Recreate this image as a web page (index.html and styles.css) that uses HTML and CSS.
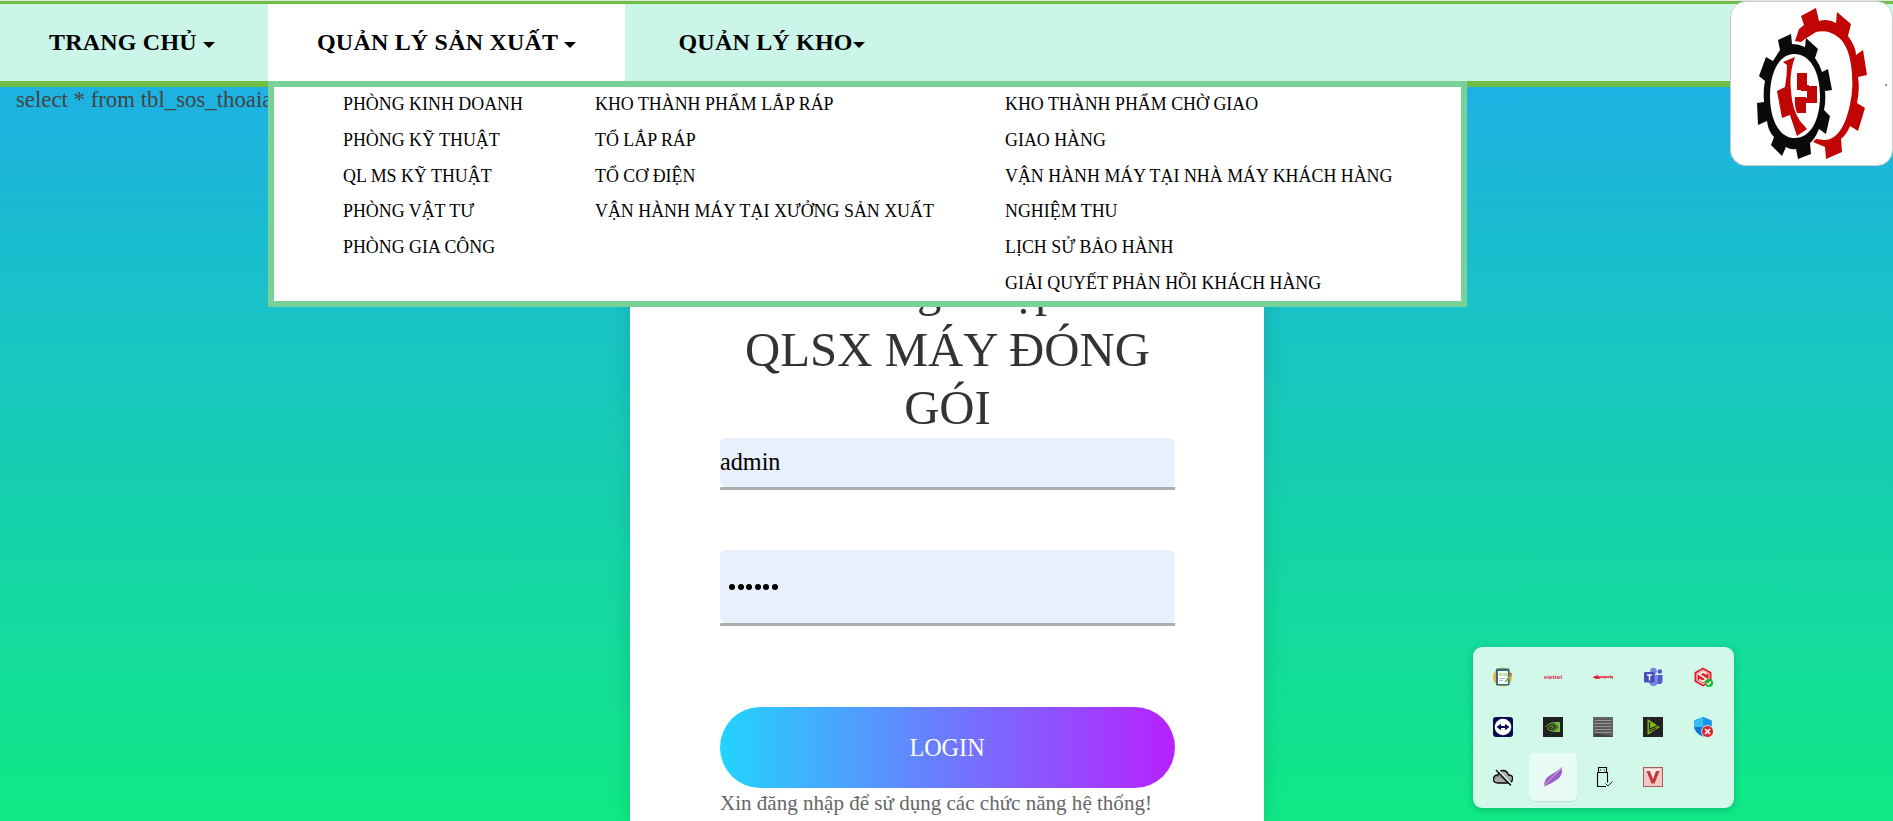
FILE: index.html
```html
<!DOCTYPE html>
<html lang="vi">
<head>
<meta charset="utf-8">
<title>QLSX</title>
<link rel="stylesheet" href="styles.css">
</head>
<body>
<header class="navbar">
  <nav class="menu">
    <a class="tab home">TRANG CHỦ <i class="caret"></i></a>
    <div class="tab active">QUẢN LÝ SẢN XUẤT <i class="caret"></i>
      <div class="dropdown">
        <ul class="col c1"><li>PHÒNG KINH DOANH</li><li>PHÒNG KỸ THUẬT</li><li>QL MS KỸ THUẬT</li><li>PHÒNG VẬT TƯ</li><li>PHÒNG GIA CÔNG</li></ul>
        <ul class="col c2"><li>KHO THÀNH PHẨM LẮP RÁP</li><li>TỔ LẮP RÁP</li><li>TỔ CƠ ĐIỆN</li><li>VẬN HÀNH MÁY TẠI XƯỞNG SẢN XUẤT</li></ul>
        <ul class="col"><li>KHO THÀNH PHẨM CHỜ GIAO</li><li>GIAO HÀNG</li><li>VẬN HÀNH MÁY TẠI NHÀ MÁY KHÁCH HÀNG</li><li>NGHIỆM THU</li><li>LỊCH SỬ BẢO HÀNH</li><li>GIẢI QUYẾT PHẢN HỒI KHÁCH HÀNG</li></ul>
      </div>
    </div>
    <a class="tab store">QUẢN LÝ KHO<i class="caret tight"></i></a>
  </nav>
</header>
<div class="logo">
  <svg viewBox="0 0 163 164" width="163" height="164">
    <g fill="#c10505">
      <path d="M65 40L69 28L74 24L71 15L86 7L89 20Q98 17 106 22L107 11L121 23L118 35Q126 46 126 54L133 49L137 74L128 76Q130 88 127 102L135 107L128 130L120 125Q117 133 111 138L112 151L96 158L95 146L83 141L86 138L94 139Q108 139 116 118Q124 95 122 73Q120 45 108 36Q98 28 86 31L75 38L71 41Z"/>
      <path d="M53 61L65 56Q59 72 61 90Q62 108 70 120L77 128L67 135L60 114L52 117L47 90L55 86Q57 74 57 64Z"/>
      <path d="M67 72h10v17h-10zM77 85h10v17h-10zM65 96h11v16h-9q-3-8-2-16zM71 84h8v6h-8zM73 97h6v5h-6z"/>
    </g>
    <path fill="#0a0a0c" fill-rule="evenodd" d="M48 39L61 33L62 43Q69 43 75 46L76 37L88 48L85 57Q90 64 92 71L98 68L102 89L95 90Q96 101 94 109L100 115L96 133L89 128Q85 138 80 142L81 153L68 158L66 148Q61 149 56 146L52 155L41 144L44 136Q38 130 37 120L28 124L27 102L34 101Q33 88 35 80L29 75L36 56L43 60L50 49ZM64 53C50 53 40 70 40 95C40 120 50 137 65 137C80 137 90 120 90 95C90 70 80 53 64 53Z"/>
    <circle cx="156" cy="84" r="1" fill="#666"/>
  </svg>
</div>
<p class="query">select * from tbl_sos_thoaia</p>
<main class="card">
  <h1><span class="greet">Đăng Nhập</span>QLSX MÁY ĐÓNG GÓI</h1>
  <div class="field user"><span>admin</span></div>
  <div class="field pass"><i></i><i></i><i></i><i></i><i></i><i></i></div>
  <button class="login">LOGIN</button>
  <p class="note">Xin đăng nhập để sử dụng các chức năng hệ thống!</p>
</main>
<aside class="tray">
  <span><svg viewBox="0 0 20 20"><circle cx="9.500" cy="10" r="9.500" fill="#f3ae35"/><rect x="3" y="1.500" width="13.500" height="17" rx="1" fill="#2d7180"/><rect x="5" y="4" width="9.800" height="13" fill="#fff"/><path d="M6 6h3v3H6zM10 6h4v3h-4z" fill="#b9e58d"/><path d="M6 11h6v1H6zM6 13h4v1H6z" fill="#bda9e6"/><path d="M12 15l6-7" stroke="#75b84d" stroke-width="1.800"/><path d="M17 9l1-3" stroke="#e34b35" stroke-width="2"/></svg></span>
  <span class="viettel">viettel</span>
  <span><svg viewBox="0 0 20 20"><path d="M0 9.500l3-.5 1-2 1 2h12l1-1v1h2v3h-1v-1h-1v1l-1-1h-5v1h-1v-1H7v1H2v-1H0z" fill="#e05560"/><path d="M1 9.500h5v1.500H1z" fill="#d01525"/></svg></span>
  <span><svg viewBox="0 0 20 20"><circle cx="10.500" cy="4" r="3.300" fill="#7b83eb"/><circle cx="16.800" cy="4.500" r="2.300" fill="#5059c9"/><path d="M13 8h6.500v6q0 3-3 3H13z" fill="#5059c9"/><path d="M6 8h9v6q0 5-4.500 5T6 14z" fill="#7b83eb"/><rect x="1" y="5" width="10.500" height="10.500" rx="1" fill="#464eb8"/><path d="M4 8h5M6.500 8v5.500" stroke="#fff" stroke-width="1.400"/></svg></span>
  <span><svg viewBox="0 0 20 20"><path d="M10 .5l8.500 4.700v9.600L10 19.500 1.500 14.800V5.200z" fill="#e31b23"/><path d="M10 3l6 3.500v7L10 17l-6-3.500v-7z" fill="none" stroke="#fff"/><path d="M14 7L10 5 6 7.200l7.500 4.800L10 14.500 6 12.500" fill="none" stroke="#fff" stroke-width="1.600"/><circle cx="16" cy="16" r="4" fill="#16b52b"/><path d="M14 16l1.500 1.500 2.500-3" fill="none" stroke="#fff" stroke-width="1.200"/></svg></span>
  <span><svg viewBox="0 0 20 20"><rect width="20" height="20" rx="3" fill="#080b50"/><circle cx="10" cy="10" r="8.300" fill="#fff"/><path d="M3.500 10L8 6.700v2.300h4V6.700l4.500 3.300-4.500 3.300V11H8v2.300z" fill="#080b50"/></svg></span>
  <span><svg viewBox="0 0 20 20"><rect width="20" height="20" fill="#202020"/><path d="M8 5h9v10H8z" fill="#76b93f"/><path d="M2.500 10q5-7 11 0-4 5-8 3-2-2 1-4 3-1 4 1-1 2-3 1" fill="none" stroke="#202020" stroke-width="2.400"/><path d="M2.500 10q5-7 11 0-4 5-8 3-2-2 1-4 3-1 4 1-1 2-3 1" fill="none" stroke="#76b93f" stroke-width="1"/></svg></span>
  <span><svg viewBox="0 0 20 20"><rect width="20" height="20" fill="#666"/><rect x="2" y="2" width="16" height="15" fill="#444"/><path d="M2 3.500h16M2 6.500h16M2 9.500h16M2 12.500h16M2 15.500h16" stroke="#999" stroke-width="1.300"/><path d="M0 20L2 16l16 2.500 2 1.500z" fill="#444"/></svg></span>
  <span><svg viewBox="0 0 20 20"><rect width="20" height="20" fill="#222"/><path d="M4.500 2L17 10 4.500 18z" fill="#7eb51c"/><path d="M6.500 5v7l9-3.500M6 14.500l7-3" stroke="#222" stroke-width="1.200" fill="none"/></svg></span>
  <span><svg viewBox="0 0 20 20"><path d="M10 0l8.500 3.500V9q0 7-8.500 10.500Q1 16 1 9V3.500z" fill="#0a78d4"/><path d="M10 0v10H1V3.500z" fill="#38bdf3"/><path d="M10 0l8.500 3.500V10H10z" fill="#1b98e5"/><circle cx="14.500" cy="14.500" r="6" fill="#e12432" stroke="#e6f8f3" stroke-width=".8"/><path d="M12 12l5 5m0-5l-5 5" stroke="#fff" stroke-width="1.700"/></svg></span>
  <span><svg viewBox="0 0 20 20"><path d="M5 16q-4.500 0-4.500-4T5 8q1-4.500 5-4.500T15.500 8Q20 8 19.500 12T15 16z" fill="#aaa" stroke="#080808" stroke-width="1.300"/><path d="M1 12q5-5 9 0t9 0" stroke="#777" fill="none"/><path d="M4 2l15 16" stroke="#d3f9ea" stroke-width="2"/><path d="M3 3l15 15.500" stroke="#000" stroke-width="1.300"/></svg></span>
  <span class="hover"><svg viewBox="0 0 20 20"><path d="M1 19.800Q1 12 6 9l8-5q3-2 5-4 1 8-4 12Q8 17 1 19.800z" fill="#9b5cc7"/><path d="M1 19Q8 11 19 1" stroke="#d9b8ee" fill="none"/></svg></span>
  <span><svg viewBox="0 0 20 20"><path d="M5.500 5V.5h8V5M4.500 5.500h10v10M4.500 5.500v14H13" fill="none" stroke="#000" stroke-width="1.100"/><path d="M7 3h1.200m2.600 0H12" stroke="#000" stroke-width="1.200"/><path d="M12.500 16.500l2.500 2.500 4.500-4.500" fill="none" stroke="#222"/></svg></span>
  <span><svg viewBox="0 0 20 20"><rect x=".5" y=".5" width="19" height="19" fill="#f3c7c6" stroke="#aa5c5c"/><path d="M2 2h16L8 12z" fill="#fae9e8"/><path d="M3.500 4H7l3 8.500L13 4h3.500l-5 12.500h-3z" fill="#c5373b"/></svg></span>
</aside>
</body>
</html>
```
FILE: styles.css
```css
* { box-sizing: border-box; }
body {
  margin: 0;
  height: 821px;
  overflow: hidden;
  position: relative;
  font-family: "Liberation Serif", "Times New Roman", serif;
  background: linear-gradient(180deg, #1fabee 0%, #10e985 100%);
}
body::before { content: ""; display: block; height: 1px; background: #dfe5df; }
.navbar {
  height: 86px;
  border-top: 3px solid #6fbf44;
  border-bottom: 6px solid #6fbf44;
  background: #ccf5ea;
}
.menu { display: flex; height: 77px; }
.tab {
  position: relative;
  display: block;
  font-size: 24px;
  font-weight: bold;
  line-height: 76px;
  letter-spacing: .2px;
  color: #000;
  white-space: nowrap;
}
.home { width: 268px; padding-left: 49px; }
.active { width: 357px; padding-left: 49px; background: #fff; }
.store { padding-left: 53.5px; }
.caret {
  display: inline-block;
  border: 6px solid transparent;
  border-top-color: #000;
  border-bottom: 0;
  vertical-align: 2px;
}
.dropdown {
  position: absolute;
  z-index: 3;
  left: 0;
  top: 77px;
  width: 1199px;
  height: 226px;
  border: 6px solid #78d199;
  background: #fff;
  display: flex;
  padding-left: 69px;
  letter-spacing: 0;
}
.col { list-style: none; margin: 0; padding: 0; }
.c1 { width: 252px; }
.c2 { width: 410px; }
.col li { height: 35.75px; line-height: 35px; font-size: 17.9px; font-weight: normal; }
.logo {
  position: absolute;
  z-index: 4;
  left: 1730px;
  top: 1px;
  width: 163px;
  height: 165px;
  border: 1px solid #c8cbca;
  border-radius: 16px;
  background: #fff;
  overflow: hidden;
}
.logo svg { display: block; margin: -1px; }
.query { margin: 0; height: 26px; padding-left: 16px; font-size: 22.8px; line-height: 26px; color: #444; }
.card {
  width: 634px;
  height: 567px;
  margin: 141px 0 0 630px;
  padding: 7px 89px 0 90px;
  background: #fff;
  box-shadow: 0 5px 20px rgba(0,0,0,.13);
}
h1 { margin: 0; font-size: 48.8px; line-height: 58px; font-weight: normal; color: #333; text-align: center; }
.greet { display: block; height: 60px; }
.field { background: #e8effd; border-radius: 6px; position: relative; display: flex; align-items: center; }
.field::after { content: ""; position: absolute; left: 0; right: 0; bottom: -3px; height: 3px; background: #adadad; }
.user { height: 49px; margin-top: 1px; padding-bottom: 1px; font-size: 24.2px; color: #000; }
.pass { height: 73px; margin-top: 63px; padding-left: 9px; gap: 2.6px; }
.pass i { width: 6px; height: 6px; border-radius: 50%; background: #000; }
.login {
  display: block;
  width: 455px;
  height: 81px;
  margin-top: 84px;
  padding: 0 1px 0 0;
  border: 0;
  border-radius: 41px;
  font: 24.2px "Liberation Serif", serif;
  color: #fff;
  background: linear-gradient(90deg, #21d4fd, #b721ff);
}
.note { margin: 3px 0 0; font-size: 21.05px; line-height: 24px; color: #666; white-space: nowrap; }
.tray {
  position: absolute;
  z-index: 2;
  left: 1473px;
  top: 647px;
  width: 261px;
  height: 161px;
  padding: 5px;
  border-radius: 9px;
  background: #d2f8ea;
  box-shadow: 0 2px 7px rgba(0,60,40,.25);
  display: grid;
  grid-template-columns: repeat(5, 50px);
  grid-template-rows: repeat(3, 50px);
}
.tray span { display: flex; align-items: center; justify-content: center; }
.tray svg { width: 20px; height: 20px; }
.tray .viettel { font: bold 6px "Liberation Sans", sans-serif; letter-spacing: .2px; color: #de2038; }
.tray .hover { margin: 1px; border-radius: 5px; background: #e8fbf4; box-shadow: 0 1px 1px rgba(0,0,0,.1); }
```
